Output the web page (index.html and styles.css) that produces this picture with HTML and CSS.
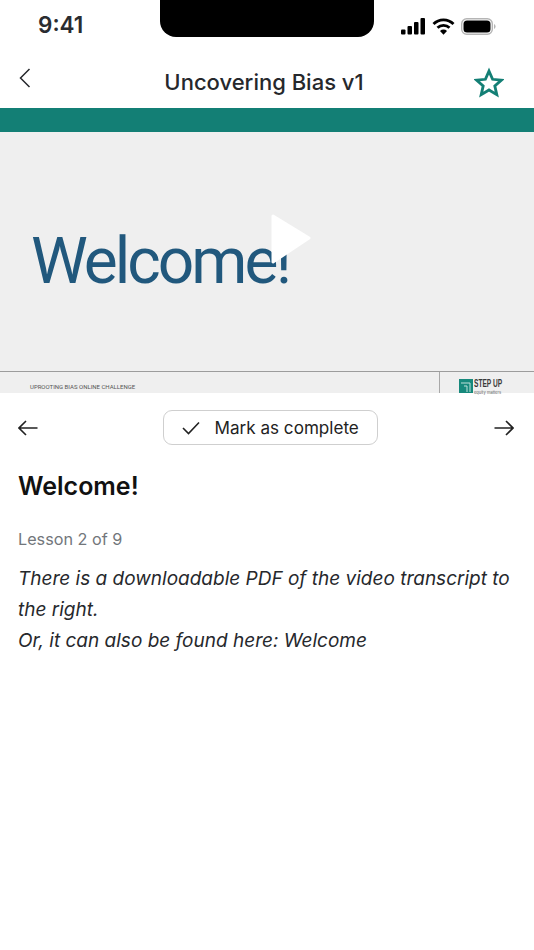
FILE: index.html
```html
<!DOCTYPE html>
<html lang="en">
<head>
    <meta charset="UTF-8">
    <meta name="viewport" content="width=device-width, initial-scale=1.0">
    <title>Uncovering Bias v1</title>
    <link rel="stylesheet" href="styles.css">
</head>
<body>
    <!-- Status bar -->
    <div class="status-bar">
        <span class="status-time">9:41</span>
        <div class="notch"></div>
        <div class="status-icons">
            <svg width="25" height="17" viewBox="0 0 25 17" fill="#000">
                <rect x="0" y="11.5" width="4.5" height="5" rx="1"/>
                <rect x="6.5" y="8" width="4.5" height="8.500" rx="1"/>
                <rect x="13" y="4" width="4.500" height="12.500" rx="1"/>
                <rect x="19.500" y="0" width="4.500" height="16.500" rx="1"/>
            </svg>
            <svg width="23" height="17" viewBox="0 0 23 17">
                <path d="M1.500 6 A14 14 0 0 1 21.500 6" fill="none" stroke="#000" stroke-width="2.800"/>
                <path d="M5.500 9.800 A8.500 8.500 0 0 1 17.500 9.800" fill="none" stroke="#000" stroke-width="2.800"/>
                <path d="M8 13 A5 5 0 0 1 15 13 L11.500 16.800 Z" fill="#000"/>
            </svg>
            <svg width="35" height="17" viewBox="0 0 35 17">
                <rect x="0.700" y="0.700" width="30.600" height="15.600" rx="5" fill="none" stroke="#b5b5b5" stroke-width="1.400"/>
                <rect x="2.500" y="2.500" width="27" height="12" rx="3.500" fill="#000"/>
                <path d="M33 6 a2.200 2.600 0 0 1 0 5 Z" fill="#b5b5b5"/>
            </svg>
        </div>
    </div>

    <!-- Header -->
    <header class="top-nav">
        <svg class="back-icon" width="12" height="20" viewBox="0 0 12 20">
            <path d="M10.500 1 L1.500 10 L10.500 19" fill="none" stroke="#26282c" stroke-width="1.500"/>
        </svg>
        <h1 class="nav-title">Uncovering Bias v1</h1>
        <svg class="star-icon" width="30" height="32" viewBox="0 -1 30 32">
            <path d="M15 3.100 L18.600 11.300 L27.400 12.100 L20.800 17.900 L22.800 26.600 L15 22 L7.200 26.600 L9.200 17.900 L2.600 12.100 L11.400 11.300 Z" fill="none" stroke="#137f75" stroke-width="2.800"/>
        </svg>
    </header>

    <div class="teal-bar"></div>

    <!-- Video -->
    <div class="video">
        <div class="slide-main">
            <span class="slide-title">Welcome!</span>
        </div>
        <div class="slide-footer">
            <span class="slide-caption">UPROOTING BIAS ONLINE CHALLENGE</span>
            <div class="slide-logo">
                <svg class="logo-mark" width="14" height="14" viewBox="0 0 14 14">
                    <rect width="14" height="14" fill="#17897c"/>
                    <path d="M2 4 H11 V13 M5 7 H8 V13" fill="none" stroke="#bfe0da" stroke-width="1"/>
                </svg>
                <div class="logo-text">
                    <span class="logo-name">STEP UP</span>
                    <span class="logo-sub">equity matters</span>
                </div>
            </div>
        </div>
        <svg class="play-icon" width="42" height="52" viewBox="0 0 42 52">
            <path d="M3 3 L39 25 L3 49 Z" fill="#fff" stroke="#fff" stroke-width="3" stroke-linejoin="round"/>
        </svg>
    </div>

    <!-- Lesson controls -->
    <div class="controls">
        <svg width="20" height="16" viewBox="0 0 20 16">
            <path d="M19.500 8 H1 M8 1 L1 8 L8 15" fill="none" stroke="#222" stroke-width="1.600"/>
        </svg>
        <button class="complete-btn">
            <svg width="18" height="14" viewBox="0 0 18 14">
                <path d="M1 7 L6.500 12.500 L17 1.500" fill="none" stroke="#222" stroke-width="1.600"/>
            </svg>
            <span>Mark as complete</span>
        </button>
        <svg width="20" height="16" viewBox="0 0 20 16">
            <path d="M0.500 8 H19 M12 1 L19 8 L12 15" fill="none" stroke="#222" stroke-width="1.600"/>
        </svg>
    </div>

    <!-- Lesson content -->
    <main class="lesson">
        <h2 class="lesson-title">Welcome!</h2>
        <p class="lesson-count">Lesson 2 of 9</p>
        <p class="lesson-text">There is a downloadable PDF of the video transcript to the right.<br>Or, it can also be found here: Welcome</p>
    </main>
</body>
</html>
```

FILE: styles.css
```css
body {
    font-family: 'Inter', 'Liberation Sans', sans-serif;
    background-color: #ffffff;
    color: #26282c;
    margin: 0;
    padding: 0;
    min-height: 100vh;
}

/* Status bar */
.status-bar {
    display: flex;
    align-items: flex-start;
    justify-content: space-between;
    height: 54px;
    padding: 0 38px;
}

.status-time {
    font-size: 22.5px;
    font-weight: 600;
    line-height: 28px;
    margin-top: 11px;
    color: #2a2c30;
}

.notch {
    width: 214px;
    height: 37px;
    margin-left: 50px;
    background-color: #000000;
    border-radius: 0 0 16px 16px;
}

.status-icons {
    display: flex;
    align-items: center;
    gap: 6px;
    margin-top: 18px;
}

/* Header */
.top-nav {
    display: flex;
    align-items: center;
    justify-content: space-between;
    height: 54px;
    padding: 0 30px 0 19px;
}

.back-icon {
    margin-top: -6px;
}

.nav-title {
    margin: 2px 0 0 23px;
    font-size: 22px;
    font-weight: 500;
    line-height: 28px;
    color: #26282c;
}

.star-icon {
    margin-top: 4px;
}

.teal-bar {
    height: 24px;
    background-color: #137f75;
}

/* Video */
.video {
    position: relative;
    height: 261px;
    background-color: #efefef;
    display: flex;
    flex-direction: column;
}

.slide-main {
    height: 240px;
    box-sizing: border-box;
    padding: 90px 0 0 31px;
    border-bottom: 1px solid #9c9c9c;
}

.slide-title {
    font-family: 'Roboto', 'Liberation Sans', sans-serif;
    font-size: 64px;
    line-height: 80px;
    letter-spacing: -3px;
    color: #21587d;
}

.slide-footer {
    flex: 1;
    min-height: 0;
    display: flex;
    justify-content: space-between;
}

.slide-caption {
    font-family: 'Roboto', sans-serif;
    font-size: 6px;
    margin: 11px 0 0 30px;
    color: #555555;
}

.slide-logo {
    display: flex;
    gap: 1px;
    width: 95px;
    box-sizing: border-box;
    padding: 6px 0 0 19px;
    border-left: 1px solid #a8a8a8;
}

.logo-mark {
    margin-top: 1px;
}

.logo-text {
    display: flex;
    flex-direction: column;
}

.logo-name {
    font-family: 'Liberation Sans', sans-serif;
    font-size: 10px;
    font-weight: 700;
    line-height: 12px;
    transform: scaleX(0.66);
    transform-origin: left;
    color: #3a3a3a;
}

.logo-sub {
    font-size: 4px;
    line-height: 5px;
    color: #666666;
}

.play-icon {
    position: absolute;
    left: 270px;
    top: 81px;
}

/* Lesson controls */
.controls {
    display: flex;
    align-items: center;
    justify-content: space-between;
    margin-top: 17px;
    height: 35px;
    padding: 0 20px 0 18px;
}

.complete-btn {
    display: flex;
    align-items: center;
    gap: 15px;
    width: 215px;
    height: 35px;
    margin-left: 8px;
    padding: 0 0 0 18px;
    box-sizing: border-box;
    background-color: #ffffff;
    border: 1px solid #cfcfcf;
    border-radius: 9px;
    font-family: inherit;
    font-size: 17.1px;
    color: #222222;
}

/* Lesson content */
.lesson {
    padding: 0 18px;
}

.lesson-title {
    margin: 25px 0 0;
    font-size: 25px;
    font-weight: 600;
    line-height: 32px;
    color: #111111;
}

.lesson-count {
    margin: 25px 0 0;
    font-size: 16.2px;
    line-height: 24px;
    color: #72767b;
}

.lesson-text {
    margin: 12px 0 0;
    font-size: 19px;
    font-style: italic;
    line-height: 31px;
    color: #26282c;
}
```
